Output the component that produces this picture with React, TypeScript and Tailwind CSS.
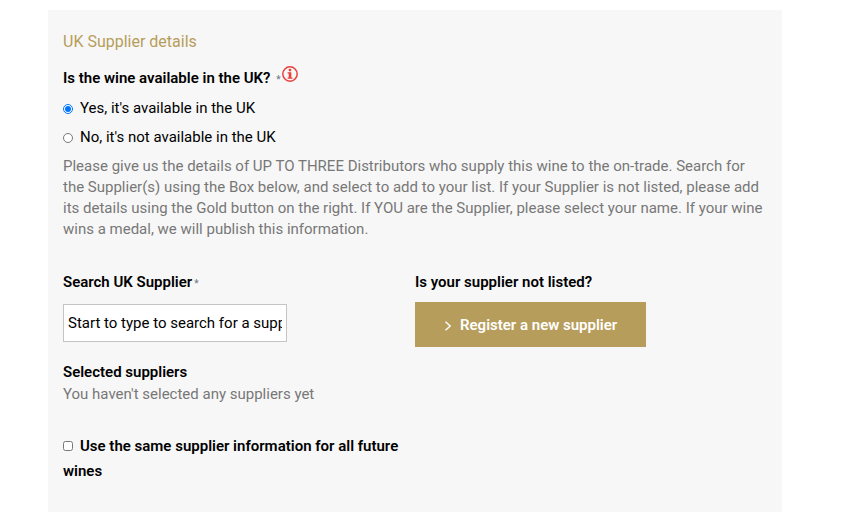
import { useState } from 'react';

interface AvailabilityOption {
  value: string;
  label: string;
}

const availabilityOptions: AvailabilityOption[] = [
  { value: 'yes', label: "Yes, it's available in the UK" },
  { value: 'no', label: "No, it's not available in the UK" },
];

function InfoIcon() {
  return (
    <svg viewBox="0 0 16 16" className="w-4 h-4" fill="none" stroke="#e8403a" aria-hidden="true">
      <circle cx="8" cy="8" r="7.2" strokeWidth="1.5" />
      <circle cx="8" cy="4.1" r="1.4" fill="#e8403a" stroke="none" />
      <path d="M5.6 6.2h3.7v5.3h1.2v1.3H5.6v-1.3h1.1V7.5H5.6z" fill="#e8403a" stroke="none" />
    </svg>
  );
}

function Required() {
  return <span className="ml-[2px] text-[10px] leading-none font-normal text-gray-500">*</span>;
}

export default function App() {
  const [available, setAvailable] = useState('yes');
  const [search, setSearch] = useState('');
  const [reuse, setReuse] = useState(false);

  return (
    <div className="min-h-screen bg-white pt-[10px] pl-12 pr-[65px] font-[Roboto,sans-serif] text-[15px] leading-[21px] text-black">
      <form className="bg-[#f7f7f7] px-[15px] pt-5 pb-10" onSubmit={(e) => e.preventDefault()}>
        <h2 className="text-base leading-6 text-[#b79d5b]">UK Supplier details</h2>

        {/* Availability */}
        <fieldset className="mt-3">
          <legend className="flex items-start font-semibold leading-6">
            <span>
              Is the wine available in the UK? <Required />
            </span>
            <button type="button" aria-label="More information" className="ml-px">
              <InfoIcon />
            </button>
          </legend>
          <div className="pt-1">
            {availabilityOptions.map((option) => (
              <label key={option.value} className="flex items-center gap-[7px] leading-[29px]">
                <input
                  type="radio"
                  name="availability"
                  value={option.value}
                  checked={available === option.value}
                  onChange={() => setAvailable(option.value)}
                  className="w-[10px] h-[10px]"
                />
                {option.label}
              </label>
            ))}
          </div>
        </fieldset>

        <p className="mt-1 text-[#777777]">
          Please give us the details of UP TO THREE Distributors who supply this wine to the on-trade. Search for
          the Supplier(s) using the Box below, and select to add to your list. If your Supplier is not listed, please
          add its details using the Gold button on the right. If YOU are the Supplier, please select your name. If
          your wine wins a medal, we will publish this information.
        </p>

        {/* Supplier search */}
        <div className="mt-8 grid grid-cols-2 items-start">
          <div className="pr-[15px]">
            <label htmlFor="supplier-search" className="block font-semibold leading-5">
              Search UK Supplier
              <Required />
            </label>
            <input
              id="supplier-search"
              type="text"
              value={search}
              onChange={(e) => setSearch(e.target.value)}
              placeholder="Start to type to search for a supplier"
              className="mt-3 block h-[38px] w-56 border border-[#c4c4c4] bg-white px-1 placeholder:text-black"
            />

            <h3 className="mt-[18px] font-semibold leading-6">Selected suppliers</h3>
            <p className="text-[#777777]">You haven't selected any suppliers yet</p>

            <label className="mt-[29px] block font-semibold leading-[25px]">
              <input
                type="checkbox"
                checked={reuse}
                onChange={(e) => setReuse(e.target.checked)}
                className="mr-[7px] w-[10px] h-[10px]"
              />
              Use the same supplier information for all future wines
            </label>
          </div>

          <div>
            <h3 className="font-semibold leading-5">Is your supplier not listed?</h3>
            <button
              type="button"
              className="mt-[10px] flex h-[45px] items-center gap-2 bg-[#b79d5b] px-[29px] pt-[2px] font-semibold text-white"
            >
              <svg viewBox="0 0 8 10" className="w-2 h-[10px]" fill="none" stroke="currentColor" strokeWidth="1.4" aria-hidden="true">
                <path d="M1.5 0.8 6.2 5 1.5 9.2" />
              </svg>
              Register a new supplier
            </button>
          </div>
        </div>
      </form>
    </div>
  );
}
